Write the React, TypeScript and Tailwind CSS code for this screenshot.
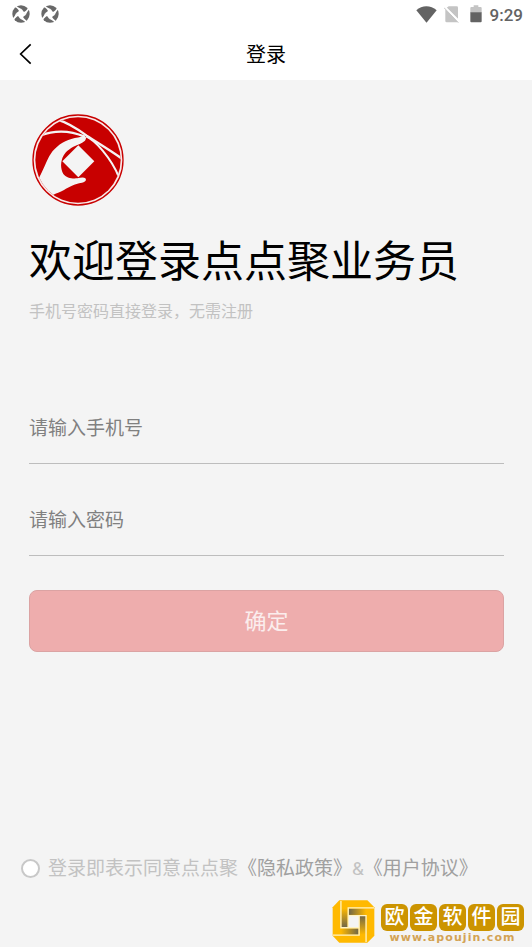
import React, { useState } from 'react';

const BRAND_CHARS = ['欧', '金', '软', '件', '园'];

const ApertureIcon: React.FC = () => (
  <svg viewBox="0 0 54 54" className="w-[18px] h-[18px]" aria-hidden="true">
    <circle cx="27" cy="27" r="26" fill="#686868" />
    <path d="M29 12 L42 29 L25 42 L12 25 Z" fill="#fff" />
    {[0, 90, 180, 270].map(angle => (
      <path
        key={angle}
        transform={`rotate(${angle} 27 27)`}
        d="M29 12 C24 10 18 7 13 2 L9 6 C14 9 19 13 22 20 Z"
        fill="#fff"
      />
    ))}
  </svg>
);

const StatusBar: React.FC = () => (
  <div className="flex h-7 items-center justify-between pl-3 pr-[9px]">
    <div className="flex items-center gap-[11px]">
      <ApertureIcon />
      <ApertureIcon />
    </div>
    <div className="flex items-center text-[#636363]">
      <svg viewBox="0 0 63 51" className="w-[21px] h-[17px]" aria-hidden="true">
        <path d="M1 13 C18 -3 44 -3 62 13 L31.500 50 Z" fill="currentColor" />
      </svg>
      <svg viewBox="0 0 48 51" className="ml-[7px] w-4 h-[17px]" aria-hidden="true">
        <path d="M14 1 H38 Q42 1 42 5 V38 L8 5 Z" fill="#c4c4c4" />
        <path d="M4 10 L42 48 Q41 49 38 49 H8 Q4 49 4 45 Z" fill="#c4c4c4" />
        <path d="M2 3 L46 48" stroke="#fff" strokeWidth="6" />
        <path d="M0 5 L43 50" stroke="#c4c4c4" strokeWidth="3" />
      </svg>
      <svg viewBox="0 0 36 54" className="ml-[10px] w-3 h-[18px]" aria-hidden="true">
        <path d="M1 23 V9 Q1 6 4 6 H11 V1 H25 V6 H32 Q35 6 35 9 V23 Z" fill="#c4c4c4" />
        <path d="M1 22 H35 V49 Q35 52 32 52 H4 Q1 52 1 49 Z" fill="currentColor" />
      </svg>
      <span className="ml-2 pt-[2px] font-[Roboto] text-[17px] leading-5 font-medium">9:29</span>
    </div>
  </div>
);

const HandLogo: React.FC = () => (
  <svg viewBox="36 26 276 276" className="ml-[3px] w-[92px] h-[92px]" role="img" aria-label="点点聚">
    <defs>
      <clipPath id="logo-disc">
        <circle cx="174" cy="164" r="128" />
      </clipPath>
    </defs>
    <circle cx="174" cy="164" r="135" fill="#f8eaea" stroke="#c80000" strokeWidth="4" />
    <circle cx="174" cy="164" r="128" fill="#c80000" />
    <g clipPath="url(#logo-disc)" fill="#f4f4f4">
      <path d="M36 240 L58 216 C72 190 80 164 92 146 C106 124 130 108 154 101 C168 96 181 96 192 91 C200 93 199 101 195 106 C186 114 174 117 160 124 C142 134 130 146 126 162 C121 178 123 194 130 206 C138 217 156 221 172 219 C182 217 191 215 196 219 C201 225 195 230 186 232 C162 236 148 244 132 254 C120 261 108 264 99 269 L78 290 Z" />
      <path d="M175 120 L223 168 L175 216 L127 168 Z" />
    </g>
    <g clipPath="url(#logo-disc)" fill="none" stroke="#f4f4f4">
      <path d="M110 42 C144 52 172 70 200 91 C232 112 266 132 306 160" strokeWidth="7" />
      <path d="M60 91 C104 74 152 76 194 94" strokeWidth="7" />
      <path d="M198 93 C214 100 232 116 248 136 C268 160 286 188 297 216" strokeWidth="6" />
    </g>
  </svg>
);

const SiteBrand: React.FC = () => (
  <div className="flex items-start gap-[6px]">
    <svg viewBox="12 11 128 130" className="w-[43px] h-[43px]" aria-hidden="true">
      <defs>
        <linearGradient id="fold-top" x1="0" y1="0" x2="1" y2="0">
          <stop offset="0" stopColor="#6f6648" />
          <stop offset="1" stopColor="#ffb900" />
        </linearGradient>
        <linearGradient id="fold-right" x1="0" y1="0" x2="0" y2="1">
          <stop offset="0" stopColor="#6f6648" />
          <stop offset="1" stopColor="#ffb900" />
        </linearGradient>
        <linearGradient id="fold-bottom" x1="1" y1="0" x2="0" y2="0">
          <stop offset="0" stopColor="#6f6648" />
          <stop offset="1" stopColor="#ffb900" />
        </linearGradient>
        <linearGradient id="fold-left" x1="0" y1="1" x2="0" y2="0">
          <stop offset="0" stopColor="#6f6648" />
          <stop offset="1" stopColor="#ffb900" />
        </linearGradient>
      </defs>
      <path d="M33 12 H118 L139 33 V119 L118 140 H33 L13 119 V33 Z" fill="#ffb900" />
      <path d="M62 37 H114 V56 H62 Z" fill="url(#fold-top)" />
      <path d="M94 59 H113 V116 H94 Z" fill="url(#fold-right)" />
      <path d="M38 97 H91 V116 H38 Z" fill="url(#fold-bottom)" />
      <path d="M39 36 H58 V94 H39 Z" fill="url(#fold-left)" />
      <path d="M60 57 H93 V95 H60 Z" fill="#f4f4f4" />
      <path
        d="M138 35 H60 V95 M114 138 V58 H60 M14 117 H93 V58 M38 14 V95 H93"
        fill="none"
        stroke="#fff3c4"
        strokeWidth="4"
      />
    </svg>
    <div className="pt-1">
      <div className="flex gap-[2px]">
        {BRAND_CHARS.map(char => (
          <span
            key={char}
            className="flex h-[27px] w-[27px] items-center justify-center rounded-md bg-[#cc9400] pb-[3px] text-[20px] leading-none font-medium text-white"
          >
            {char}
          </span>
        ))}
      </div>
      <div className="mt-[1px] text-center font-['DejaVu_Sans'] text-[11px] leading-3 font-bold tracking-widest text-[#d3a355]">
        www.apoujin.com
      </div>
    </div>
  </div>
);

const App: React.FC = () => {
  const [phone, setPhone] = useState('');
  const [password, setPassword] = useState('');
  const [agreed, setAgreed] = useState(false);

  const inputClass =
    'h-[72px] w-full border-b border-[#bdbdbd] bg-transparent pb-[2px] text-[19px] text-gray-800 placeholder:text-[#808080] outline-none';

  return (
    <div className="flex min-h-screen flex-col bg-[#f4f4f4] font-['Noto_Sans_CJK_SC',sans-serif]">
      <header className="bg-white">
        <StatusBar />
        <div className="grid h-[52px] grid-cols-[1fr_auto_1fr] items-center">
          <button type="button" aria-label="返回" className="ml-[18px] w-4">
            <svg viewBox="0 0 48 66" className="w-4 h-[22px]" aria-hidden="true">
              <path d="M38 4 L8 33 L38 62" fill="none" stroke="#000" strokeWidth="5" />
            </svg>
          </button>
          <h1 className="text-[20px] leading-7 text-black">登录</h1>
        </div>
      </header>

      <main className="flex flex-col pt-[34px] pr-7 pl-[29px]">
        <HandLogo />
        <h2 className="mt-7 text-[43px] leading-[48px] font-normal whitespace-nowrap text-black">欢迎登录点点聚业务员</h2>
        <p className="mt-4 text-base leading-6 text-[#c2c2c2]">手机号密码直接登录，无需注册</p>

        <form className="mt-[70px] flex flex-col" onSubmit={e => e.preventDefault()}>
          <div className="flex flex-col gap-5">
            <input
              type="tel"
              aria-label="手机号"
              placeholder="请输入手机号"
              value={phone}
              onChange={e => setPhone(e.target.value)}
              className={inputClass}
            />
            <input
              type="password"
              aria-label="密码"
              placeholder="请输入密码"
              value={password}
              onChange={e => setPassword(e.target.value)}
              className={inputClass}
            />
          </div>
          <button
            type="submit"
            className="mt-[34px] h-[62px] rounded-lg border border-[#dba3a3] bg-[#eeadad] pb-1 text-[22px] text-[#fbeded]"
          >
            确定
          </button>
        </form>
      </main>

      <footer className="mt-auto pb-[3px]">
        <div className="flex items-center gap-2 pl-[21px] text-[19px] leading-7 whitespace-nowrap text-[#c2c2c2]">
          <input
            id="agree"
            type="checkbox"
            checked={agreed}
            onChange={e => setAgreed(e.target.checked)}
            className="h-[19px] w-[19px] shrink-0 appearance-none rounded-full border-2 border-[#c8c8c8] bg-white checked:bg-[#c80000]"
          />
          <div>
            <label htmlFor="agree">登录即表示同意点点聚</label>
            <a href="#privacy" className="text-[#a0a0a0]">《隐私政策》</a>
            <span className="font-[Roboto]">&amp;</span>
            <a href="#terms" className="text-[#a0a0a0]">《用户协议》</a>
          </div>
        </div>
        <div className="mt-[17px] flex justify-end pr-2">
          <SiteBrand />
        </div>
      </footer>
    </div>
  );
};

export default App;
